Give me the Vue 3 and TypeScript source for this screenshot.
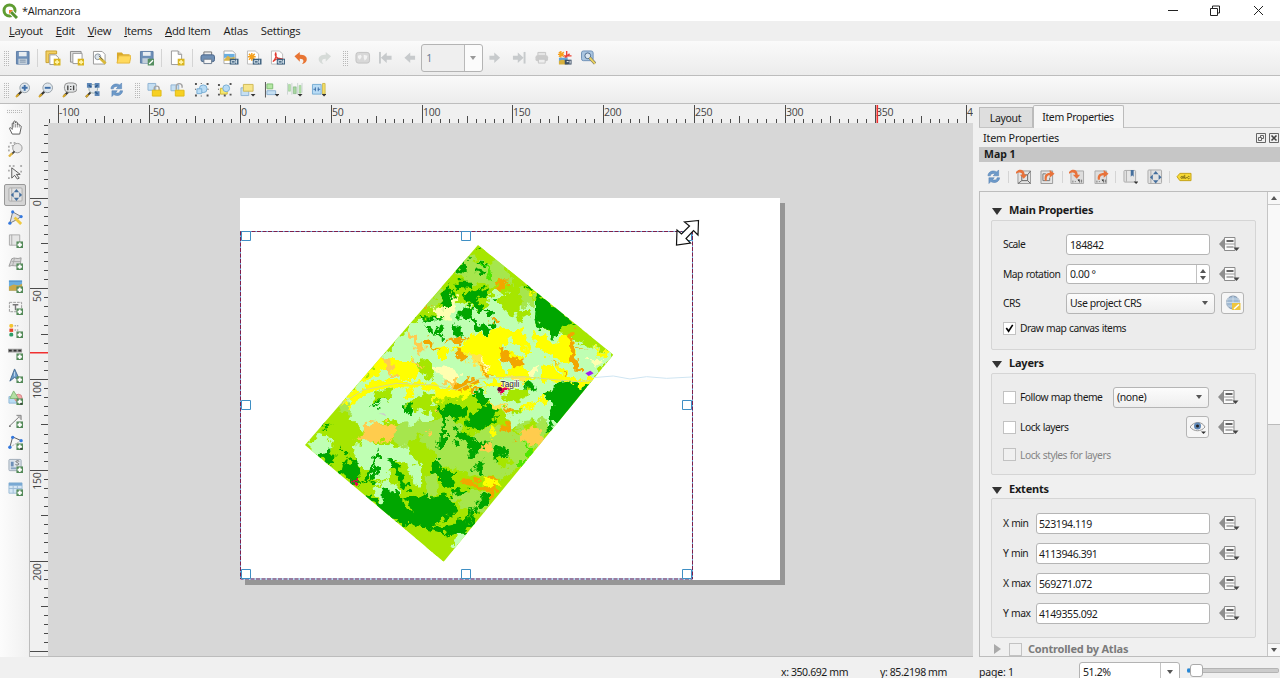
<script setup lang="ts">
interface Tick { p: number; size: number; label?: string }

const icons: Record<string, string> = {
  save: '<path d="M1.500 1.500h13v13h-13z" fill="#6d8fb8" stroke="#5f7fa6"/><path d="M4 2h8v4.500H4z" fill="#e9eef2"/><path d="M3.500 9h9v5.500h-9z" fill="#c3cfdb"/><path d="M5 10.500h6M5 12.500h6" stroke="#8196ac"/>',
  newlay: '<path d="M1 1h11v3H4v9H1z" fill="#f3d063" stroke="#c8a030"/><path d="M5 5h6l3 3v7H5z" fill="#fff" stroke="#9a9a9a"/><path d="M9 9h7v7H9z" fill="#d9b520"/><path d="M12.500 10.300v4.400M10.300 12.500h4.400" stroke="#fff4a8" stroke-width="1.600"/>',
  dup: '<path d="M1.500 1.500h11v11h-11z" fill="#ddd" stroke="#8b8b8b"/><path d="M4 3.500h9.500V14H4z" fill="#fff" stroke="#999"/><path d="M9 9h7v7H9z" fill="#d9b520"/><path d="M12.500 10.300v4.400M10.300 12.500h4.400" stroke="#fff4a8" stroke-width="1.600"/>',
  manager: '<path d="M1.500 1.500h9l3 3v10h-12z" fill="#fff" stroke="#9a9a9a"/><circle cx="6" cy="7" r="3" fill="#dce5ec" stroke="#8a949c"/><path d="M8 8l6 6" stroke="#d8b83a" stroke-width="3"/><path d="M7 6l4 4" stroke="#666"/>',
  folder: '<path d="M1 2.500h5l1.500 2H14v9H1z" fill="#d9a92a"/><path d="M1 13.500L3 6h12.500L14 13.500z" fill="#ffd95c" stroke="#e5b83f"/>',
  savetpl: '<path d="M1.500 1.500h13v12h-13z" fill="#6d8fb8" stroke="#5f7fa6"/><path d="M4 2h8v4H4z" fill="#e9eef2"/><path d="M3.500 8.500h7v5h-7z" fill="#c3cfdb"/><path d="M9 9h7v7H9z" fill="#568f61"/><path d="M10.500 14.500l4-4" stroke="#fff" stroke-width="1.400"/>',
  page: '<path d="M2.500 1h7l3.500 3.500V15H2.500z" fill="#fff" stroke="#999"/><path d="M9.500 1v3.500H13" fill="#ddd" stroke="#999"/><path d="M9 9h7v7H9z" fill="#d9b520"/><path d="M12.500 10.300v4.400M10.300 12.500h4.400" stroke="#fff4a8" stroke-width="1.600"/>',
  print: '<path d="M4 2h8v4H4z" fill="#eee" stroke="#777"/><rect x="1" y="5" width="14" height="7" rx="2" fill="#6f8fb4" stroke="#4b6689"/><path d="M4 9.500h8V14H4z" fill="#f5f5f5" stroke="#6b7c90"/>',
  image: '<path d="M1 1h9l3 3v10H1z" fill="#fff" stroke="#aaa"/><path d="M1 4h11v4H1z" fill="#6aaee0"/><path d="M1 10l4-4 3 2 4-1v4H1z" fill="#d8b54a"/><path d="M7 9h9v6H7z" fill="#3c5f7d"/><path d="M8.500 11h4v2.500h-4zM14 10v4" fill="none" stroke="#dce8f0"/>',
  svgx: '<path d="M1.500 1h8L13 4v10.500H1.500z" fill="#fff" stroke="#bbb"/><path d="M6 3v8M2 7h8M3 4l6 6M9 4l-6 6" stroke="#f5a01c" stroke-width="1.500"/><path d="M7 9h9v6H7z" fill="#3c5f7d"/><path d="M8.500 11h4v2.500h-4zM14 10v4" fill="none" stroke="#dce8f0"/>',
  pdf: '<path d="M1.500 1h8L13 4v10.500H1.500z" fill="#fff" stroke="#bbb"/><path d="M3 12c3-3 4-7 3-9-2 3 2 7 6 6-3-1-6 0-9 3z" fill="none" stroke="#e23b30" stroke-width="1.200"/><path d="M7 9h9v6H7z" fill="#3c5f7d"/><path d="M8.500 11h4v2.500h-4zM14 10v4" fill="none" stroke="#dce8f0"/>',
  undo: '<path d="M1.500 6.500L7 2v3c6-.5 8 3 7 6-.8 2-2.500 3.200-5 3.500 2.300-1.600 3-5.500-2-5.500v3z" fill="#e87534"/>',
  redo: '<path d="M14.500 6.500L9 2v3C3 4.500 1 8 2 11c.8 2 2.500 3.200 5 3.500C4.700 12.900 4 9 9 9v3z" fill="#d6dbd8"/>',
  atlas: '<rect x="1" y="2.500" width="14" height="11" rx="2.500" fill="#d8d8d8" stroke="#c2c2c2"/><path d="M3 6l3-1 1 2-2 3-2-2zM9 5l4 1-1 3-2 2-1-3z" fill="#f3f3f3"/>',
  first: '<path d="M2 2v12" stroke="#c7cacc" stroke-width="2"/><path d="M3 8l6-5.500V6h5v4H9v3.500z" fill="#c7cacc"/>',
  prev: '<path d="M2.500 8l6-5.500V6h5v4h-5v3.500z" fill="#c7cacc"/>',
  next: '<path d="M13.500 8l-6-5.500V6h-5v4h5v3.500z" fill="#c7cacc"/>',
  last: '<path d="M14 2v12" stroke="#c7cacc" stroke-width="2"/><path d="M13 8L7 2.500V6H2v4h5v3.500z" fill="#c7cacc"/>',
  printoff: '<path d="M4 2.500h8V6H4z" fill="#e5e5e5" stroke="#c6c6c6"/><rect x="1.500" y="5.500" width="13" height="6" rx="2" fill="#cbcbcb"/><path d="M4.500 9.500h7v4h-7z" fill="#eee" stroke="#c6c6c6"/>',
  export: '<path d="M4 1v7M1 4.500h6M2 2l5 5M7 2L2 7" stroke="#f5a01c" stroke-width="1.400"/><path d="M10 1v7M7 6h8M8 8l5-4" stroke="#ea4436" stroke-width="1.400"/><path d="M2 8h9v6H2z" fill="#64a5d6"/><path d="M2 11l3-1 6 1v4H2z" fill="#d8b03c"/><path d="M8 10h7v5H8z" fill="#3b4f66"/><path d="M10 12h2M13.500 11v3" stroke="#fff"/>',
  atlasset: '<rect x="0.500" y="1" width="12" height="10" rx="2" fill="#a9c5e0" stroke="#6f92b8"/><circle cx="7" cy="6" r="3" fill="#dbe6ef" stroke="#4d6c8e"/><path d="M9 8l5.500 6" stroke="#6b6b6b" stroke-width="3.200"/><path d="M9 8l5.500 6" stroke="#ead25e" stroke-width="2"/>',
  zoomin: '<path d="M2 14.500L6.500 10" stroke="#333" stroke-width="2.200"/><path d="M1 15.500l3-3" stroke="#d8a82a" stroke-width="2"/><circle cx="10" cy="6" r="5" fill="#dfe7ee" stroke="#98a1a8"/><path d="M10 3v6M7 6h6" stroke="#3f6fa8" stroke-width="2"/>',
  zoomout: '<path d="M2 14.500L6.500 10" stroke="#333" stroke-width="2.200"/><path d="M1 15.500l3-3" stroke="#d8a82a" stroke-width="2"/><circle cx="10" cy="6" r="5" fill="#dfe7ee" stroke="#98a1a8"/><path d="M7 6h6" stroke="#3f6fa8" stroke-width="2"/>',
  zoomone: '<path d="M2 14.500L6.500 10" stroke="#333" stroke-width="2.200"/><path d="M1 15.500l3-3" stroke="#d8a82a" stroke-width="2"/><rect x="2.500" y="1" width="13" height="9.500" rx="4" fill="#e4e6e7" stroke="#909090"/><path d="M6 3.500v5M12 3.500v5M9 4v1.200M9 7v1.200" stroke="#444" stroke-width="1.400"/>',
  zoomfull: '<path d="M1 15.500l5-5" stroke="#333" stroke-width="2"/><path d="M1 15.500l2.500-2.500" stroke="#d8a82a" stroke-width="2"/><circle cx="8.500" cy="7" r="4.500" fill="#e5e9ec" stroke="#9aa"/><path d="M2 1h5v5H2zM10 1h5v5h-5zM10 9.500h5v5h-5z" fill="#5c86b6"/><path d="M6.500 5.500L4 3M10.500 5.500L13 3M10.500 10L13 12.500" stroke="#2f5a8c" stroke-width="1.400"/>',
  refresh: '<path d="M2 7C2 3 7 .5 11 3l2-2v6H7.500L9.300 5C7 4 4.500 5 4.500 7z" fill="#6d9ac9" stroke="#4a79ae" stroke-width=".5"/><path d="M14 9c0 4-5 6.500-9 4l-2 2V9h5.500L6.700 11c2.300 1 4.800 0 4.800-2z" fill="#6d9ac9" stroke="#4a79ae" stroke-width=".5"/>',
  lock: '<path d="M1 1.500h8v7H1z" fill="#c5dff2" stroke="#8fb4d4"/><path d="M7.500 9V6.500c0-3 5-3 5 0V9" fill="none" stroke="#a3a3a3" stroke-width="1.500"/><path d="M5.500 8.500h9v6h-9z" fill="#f7d022" stroke="#e0bb17"/>',
  unlock: '<path d="M1 3h8v6H1z" fill="#c5dff2" stroke="#8fb4d4"/><path d="M6.500 8V4.500c0-4 6-3.500 6 0V6" fill="none" stroke="#a3a3a3" stroke-width="1.500"/><path d="M5.500 8.500h9v6h-9z" fill="#f7d022" stroke="#e0bb17"/>',
  group: '<circle cx="9.500" cy="7" r="4" fill="#b9dcf5" stroke="#78add4"/><path d="M3 7h5v5H3z" fill="#b9dcf5" stroke="#78add4"/><path d="M1 1h2v2H1zM13 1h2v2h-2zM1 13h2v2H1zM13 13h2v2h-2zM7 1h1v1H7zM1 7h1v1H1zM14 7h1v1h-1zM7 14h1v1H7z" fill="#555"/>',
  ungroup: '<path d="M3.500 6.500h7v6h-7z" fill="#f5e770" stroke="#d1b737"/><circle cx="9.500" cy="6.500" r="3.500" fill="#b9dcf5" stroke="#78add4"/><path d="M1 2h2v2H1zM13 1h2v2h-2zM1 12h2v2H1zM13 12h2v2h-2zM7 13h2v2H7zM1 7h1v1H1z" fill="#555"/>',
  raise: '<path d="M1 6h8v8H1z" fill="#c5dff2" stroke="#8fb4d4"/><path d="M3.500 2.500h10v7h-10z" fill="#f7e58a" stroke="#d0ba58"/><path d="M11 12.500h5L13.500 15z" fill="#333"/>',
  align: '<path d="M1.500 0v16" stroke="#555"/><path d="M3 2h6v5H3z" fill="#b3e8a2" stroke="#7fbd74"/><path d="M3 9h9v4H3z" fill="#c5dff2" stroke="#8fb4d4"/><path d="M11 12.500h5L13.500 15z" fill="#333"/>',
  distrib: '<path d="M1.500 2.500h2v7h-2zM12.500 3.500h2v8h-2z" fill="#b5e4aa" stroke="#8dc387" stroke-width=".5"/><path d="M6.500 5h3v7h-3z" fill="#a8d7a0" stroke="#69a16e" stroke-width=".5"/><path d="M.5 1v12M5 1v12M11 1v12M15.500 1v10" stroke="#b9c7c4" stroke-width=".7"/><path d="M11 12.500h5L13.500 15z" fill="#333"/>',
  resize: '<path d="M1.500 2.500h9v10h-9z" fill="#b9dcf5" stroke="#78add4"/><path d="M2.500 7.500h2.500M7 7.500h2.500M4.500 5.500v4M7.500 5.500v4" stroke="#3f6fa8"/><path d="M12 1.500h2.500v11H12z" fill="#f7e26a" stroke="#cdb94c"/><path d="M11 12.500h5L13.500 15z" fill="#333"/>',
  hand: '<path d="M4.500 15L2 10c-1-2 .5-2.500 1.500-1L4.500 10V4c0-1.300 1.600-1.300 1.600 0V2c0-1.300 1.900-1.300 1.900 0v1c0-1.300 2-1.300 2 0v2c0-1 1.800-1 1.800 0L13 6c1 0 1.500 1 1 2l-1.500 7z" fill="#fff" stroke="#555"/><path d="M6.200 4v4M8.100 4v4M10 4v4M12 5v3" stroke="#777" stroke-width=".8"/>',
  pan: '<path d="M2 1h2M6 1h2M1 4v2M1 8v2M4 4h1" stroke="#666"/><circle cx="10" cy="6.500" r="5" fill="#e9e9e9" stroke="#999"/><path d="M7 10l-3 3" stroke="#444" stroke-width="2"/><path d="M4.500 12L1 15.500" stroke="#dfb544" stroke-width="2.500"/>',
  select: '<path d="M1 1h2M5 1h2M13 1h2M1 5v2M1 13v2M14 6v2" stroke="#999" stroke-width="1.500"/><path d="M4 3l9 7H9l3 4-2 1-3-4-3 3z" fill="#eee" stroke="#555"/>',
  move: '<rect x="1" y="1" width="14" height="14" rx="1" fill="#e2e2e2" stroke="#aaa"/><path d="M4 1v14" stroke="#aaa"/><path d="M9 2l2.800 3.500H6.200zM9 15l2.800-3.500H6.200zM3 8.500L6 5.700v5.600zM15 8.500l-3-2.800v5.600z" fill="#456f9d"/>',
  nodes: '<path d="M2 14L5 2l9 5L8 11z" fill="#e2e2e2" stroke="#777"/><path d="M7 8l7 7" stroke="#efc940" stroke-width="3"/><circle cx="5" cy="2" r="1.700" fill="#3478de"/><circle cx="14" cy="7" r="1.700" fill="#3478de"/><circle cx="2" cy="14" r="1.700" fill="#3478de"/>',
  addmap: '<path d="M1.500 2h11v11h-11z" fill="#e6e6e6" stroke="#aaa"/><path d="M4 2v11" stroke="#aaa"/>PLUS',
  add3d: '<path d="M4 4c3-2 5 1 10-1l-1 8c-4 2-8-1-12 1z" fill="#d6d6d6" stroke="#999"/><path d="M4 7h9M7 3L5 11" stroke="#aaa"/>PLUS',
  addpic: '<path d="M1 2.500h14v11H1z" fill="#6aaee0"/><path d="M1 9l5-2 5 1 4-2v7.500H1z" fill="#c9a84a"/><path d="M1 3.500h14" stroke="#5590c7"/>PLUS',
  addlabel: '<path d="M1.500 2.500h13v10h-13z" fill="#f4f4f4" stroke="#999" stroke-dasharray="3 1"/><path d="M5 5h6M8 5v6" stroke="#777" stroke-width="1.500"/>PLUS',
  addlegend: '<rect x="1.500" y="1" width="4" height="4" rx="1.500" fill="#f4c430"/><path d="M1.500 6h4v3.500h-4z" fill="#e8452c"/><rect x="1.500" y="10.500" width="4" height="4" rx="1.500" fill="#2d9c66"/><path d="M7 3h5M7 7.500h4" stroke="#888" stroke-dasharray="1.500 1"/>PLUS',
  addscale: '<path d="M0 4h15v4H0z" fill="#999"/><path d="M1 6h3M6 6h3M11 6h3" stroke="#333" stroke-width="2"/>PLUS',
  addnorth: '<path d="M7 1l6 13-6-4-5 4z" fill="#6d9bc9" stroke="#446a91"/><path d="M7 4v5" stroke="#c8deef"/>PLUS',
  addshape: '<path d="M1 7h8v7H1z" fill="#b9dcf5" stroke="#91b9d7"/><circle cx="11" cy="8.500" r="4" fill="#f4a9a9" stroke="#d58686"/><path d="M6 1l5 8H2z" fill="#b4e0a4" stroke="#80b876"/>PLUS<path d="M12 14h4l-2 2z" fill="#333"/>',
  addarrow: '<path d="M1.500 14L13 3" stroke="#777"/><path d="M9 2.500h5v5" fill="#bbb" stroke="#888"/><circle cx="2" cy="14" r="1" fill="#777"/>PLUS',
  addnode: '<path d="M2 13L5 2l9 4" fill="none" stroke="#555"/><path d="M2 13L14 6" stroke="#aaa" stroke-dasharray="2 1"/><circle cx="5" cy="2.500" r="1.800" fill="#3478de"/><circle cx="14" cy="6" r="1.800" fill="#3478de"/><circle cx="2" cy="13" r="1.800" fill="#3478de"/>PLUS<path d="M12 14h4l-2 2z" fill="#333"/>',
  addhtml: '<rect x="1" y="1.500" width="13" height="12" rx="1" fill="#dce3ea" stroke="#9daab6"/><path d="M3 4h3v5H3z" fill="#6d8fb8"/><path d="M12 3.500c-3-1.500-5 .5-2 1.500s1 3.500-2 2" fill="none" stroke="#666"/><path d="M3 11h6" stroke="#8aa5c3" stroke-width="2"/>PLUS',
  addtable: '<path d="M1 2h14v11H1z" fill="#d5e6f4" stroke="#9dbcd6"/><path d="M1 2h14v3H1z" fill="#79a9d3"/><path d="M5.500 5v8M10 5v8M1 8h14" stroke="#9dbcd6"/>PLUS',
  setin: '<path d="M2 2h13v13H2z" fill="#e4e4e4" stroke="#999"/><path d="M6 6h6v6H6zM12 6l3-4M12 12l3 3M6 12l-4 3" stroke="#666" fill="none"/><path d="M0 3C4-1 9 1 9 6h2.500L8 10 4 6h2.500C6 3 3 3 0 5z" fill="#e8723a"/>',
  setout: '<path d="M1 2h12v13H1z" fill="#e4e4e4" stroke="#999"/><path d="M3 5h3M3 5v7h7V9" stroke="#777" fill="none"/><path d="M5 12C4 6 6 4 10 4V1l5 4-5 4V6.500C7 6.500 7 9 7 12z" fill="#e8723a"/>',
  scin: '<path d="M2 2h13v13H2z" fill="#ddd" stroke="#aaa"/><path d="M4 12v2M6 13h1M9 11h2v3M13 11v3" stroke="#777"/><path d="M0 3C4-1 9 1 9 6h2.500L8 10 4 6h2.500C6 3 3 3 0 5z" fill="#e8723a"/>',
  scout: '<path d="M1 2h12v13H1z" fill="#ddd" stroke="#aaa"/><path d="M3 12v2M5 13h1M8 11h2v3M12 11v3" stroke="#777"/><path d="M4 11C3 6 6 4 10 4V1l5 4-5 4V6.500C7 6.500 6 8 6 11z" fill="#e8723a"/>',
  bookmark: '<rect x="1" y="1.500" width="12" height="12" rx="1" fill="#e6e6e6" stroke="#aaa"/><path d="M3.500 2v11" stroke="#aaa"/><path d="M8 1h3v7L9.500 6.500 8 8z" fill="#456f9d"/><path d="M11 13h5l-2.500 2.500z" fill="#333"/>',
  label: '<path d="M1 8l3-3.500h11.500v7.500H4z" fill="#f7da35" stroke="#c4a21a"/><circle cx="6" cy="8.700" r="1" fill="none" stroke="#6a5a12" stroke-width=".8"/><path d="M7.500 7v3M9 6v4M11 8.500a1 1 0 1 1-2 .2M14 8a1.200 1.200 0 1 0 0 1.700" fill="none" stroke="#6a5a12" stroke-width=".8"/>',
  override: '<path d="M0 8l5-5.500v11z" fill="#8f8f8f"/><path d="M5.500 1.500h10.500v13h-10.500z" fill="#fafafa" stroke="#8b8b8b"/><path d="M7.500 5h7" stroke="#333" stroke-width="1.500"/><path d="M5.500 8h10.500" stroke="#999"/><path d="M7.500 11h7" stroke="#666"/><path d="M14.500 11.500h6l-3 3.500z" fill="#444"/>',
  globe: '<circle cx="8" cy="7.500" r="6.500" fill="#9fb9d3" stroke="#8094aa"/><path d="M1.500 7.500h13M8 1v13M3 4h10M3 11h10" stroke="#dce6ef" stroke-width=".7"/><path d="M4 1.500c-4 6-2 10 0 12M12 1.500c4 6 2 10 0 12" stroke="#dce6ef" fill="none" stroke-width=".7"/><path d="M7 8h8.500v7H7z" fill="#efc63e"/><path d="M9 14l5-4.500" stroke="#fff" stroke-width="1.500"/>',
  eye: '<path d="M0 8C4 2 12 2 15 8 11 13 4 13 0 8z" fill="#f5f5f5" stroke="#999"/><circle cx="7.500" cy="7" r="3.500" fill="#5e87b6"/><circle cx="7.500" cy="7" r="1.500" fill="#222"/><path d="M11 12.500h5L13.500 15z" fill="#333"/>',
}
const plus = '<path d="M9 9h7v7H9z" fill="#548a59"/><path d="M12.500 10.200v4.600M10.200 12.500h4.600" stroke="#fff" stroke-width="2"/>'
const icon = (name: string) => icons[name].replace('PLUS', plus)

const menus = ['Layout', 'Edit', 'View', 'Items', 'Add Item', 'Atlas', 'Settings']
const mainBar = ['#', 'save', '|', 'newlay', 'dup', 'manager', 'folder', 'savetpl', '|', 'page', '|', 'print', 'image', 'svgx', 'pdf', 'undo', 'redo', '#', 'atlas', 'first', 'prev', '=', 'next', 'last', 'printoff', 'export', 'atlasset']
const viewBar = ['#', 'zoomin', 'zoomout', 'zoomone', 'zoomfull', 'refresh', '#', 'lock', 'unlock', 'group', 'ungroup', 'raise', 'align', 'distrib', 'resize']
const tools = ['hand', 'pan', 'select', 'move', 'nodes', 'addmap', 'add3d', 'addpic', 'addlabel', 'addlegend', 'addscale', 'addnorth', 'addshape', 'addarrow', 'addnode', 'addhtml', 'addtable']
const mapBar = ['refresh', '|', 'setin', 'setout', '|', 'scin', 'scout', '|', 'bookmark', 'move', '|', 'label']
const extents = [
  { name: 'X min', value: '523194.119' },
  { name: 'Y min', value: '4113946.391' },
  { name: 'X max', value: '569271.072' },
  { name: 'Y max', value: '4149355.092' },
]

const pxPerMm = 1.8155
function ticks(from: number, to: number, origin: number): Tick[] {
  const out: Tick[] = []
  for (let mm = from; mm <= to; mm += 5) {
    const major = mm % 50 === 0
    out.push({ p: Math.round(origin + mm * pxPerMm) + 0.5, size: major ? 18 : mm % 25 === 0 ? 7 : 4, label: major ? String(mm) : undefined })
  }
  return out
}
const hTicks = ticks(-105, 400, 240)
const vTicks = ticks(-40, 250, 197.500)
const handles = [[241, 231], [461, 231], [682, 231], [241, 400], [682, 400], [241, 569], [461, 569], [682, 569]]

const land: Record<string, string[]> = {
  '#bfffb3': [
    '375,270 440,265 500,230 560,240 620,180 660,200 740,220 740,290 850,330 970,374 890,470 830,530 800,600 700,600 640,540 540,480 420,525 330,540 260,560 220,600 180,560 150,525 270,390',
    '480,210 540,225 550,280 520,315 470,290 465,240', '180,530 270,500 400,500 430,560 380,600 300,570 240,590 190,560',
    '45,645 105,605 130,620 130,665 90,690', '190,650 230,620 260,640 300,650 350,640 385,690 395,770 370,765 350,700 310,690 300,730 260,760 230,720 210,720',
    '250,770 280,760 280,820 265,825', '730,480 780,500 785,560 750,575 700,570 660,600 650,560 700,520', '500,905 540,910 490,960', '290,740 330,790 320,800 270,760',
  ],
  '#a6e64d': [
    '530,85 590,75 640,90 690,130 680,165 620,150 600,170 560,160 490,150 490,125', '690,165 735,195 730,235 690,215', '400,230 450,180 455,215 420,240',
    '310,600 330,580 380,575 440,570 490,560 520,600 520,670 480,680 440,660 380,650 320,645', '560,600 650,590 720,640 740,650 700,700 640,740 560,740 500,720 430,700 440,640 500,650',
    '680,580 770,565 775,610 740,650 690,610', '480,800 560,780 610,800 580,850 530,840', '140,520 170,510 190,560 170,570', '410,740 440,730 440,790 410,800',
  ],
  '#a6e600': [
    '560,50 610,85 610,100 550,85', '440,170 500,125 530,160 500,190 460,180', '620,205 670,190 700,220 680,260 640,240', '690,240 715,240 700,280 670,265',
    '375,405 405,385 440,405 430,450 400,440', '395,245 425,240 430,265 400,262', '820,280 870,285 860,315 830,305', '875,310 900,315 895,335 880,330',
    '260,485 310,470 300,500 260,515', '350,525 400,485 430,500 420,550 370,540', '430,510 490,495 460,540', '650,480 730,470 700,510 640,520', '560,190 600,215 590,240 560,220', '640,100 690,130 700,165 670,160',
    '700,590 740,570 740,610 710,620', '660,540 700,535 670,560', '350,640 390,620 410,650 380,700', '90,590 150,540 180,560 200,600 170,650 130,640', '610,680 680,690 640,720', '645,430 665,425 675,437 655,440',
  ],
  '#ffff00': [
    '520,340 540,315 600,310 630,290 660,310 690,295 710,320 715,375 690,390 630,380 650,440 600,440 580,410 530,375 480,360 500,345', '650,300 690,300 710,350 690,375 660,340',
    '725,305 800,340 830,310 860,350 860,380 820,400 740,350', '270,385 300,390 360,390 385,420 380,445 330,450 300,410 250,440 210,460 180,490 165,525 150,525',
    '440,350 470,345 480,380 445,385', '430,465 500,480 550,490 520,505 430,510', '660,390 700,410 740,450 700,460 650,440', '180,500 240,460 300,450 430,460 500,490 550,460 620,450 680,470 560,480 490,500 440,480 320,470 240,480 190,510',
    '760,410 800,395 840,430 860,460 750,450', '910,355 960,370 930,385', '740,520 790,465 860,455 910,440 920,445 870,470 800,470 740,530 690,540 690,530', '190,475 240,485 170,540', '350,480 370,460 365,500 345,510', '600,590 615,600 610,630 602,625', '580,750 620,745 640,770 600,770', '725,175 740,190 725,190',
  ],
  '#bfffb4': ['640,340 665,325 690,350 705,385 660,370 635,355', '505,420 535,400 570,440 530,440', '580,400 545,385 575,435', '770,370 790,390 830,400 850,430 800,400', '700,290 720,300 745,370 790,400 820,440 770,400 730,400 720,345', '540,470 580,455 600,475 550,478'],
  '#ffffb0': ['425,235 465,225 490,195 505,200 490,250 480,275 440,260', '440,410 490,415 510,430 500,460 460,450 445,435', '565,375 580,380 595,430 570,410', '890,390 940,390 930,410 900,400', '720,410 745,410 735,440 715,430'],
  '#ffe64d': ['530,370 570,370 590,430 570,425', '520,390 545,400 530,400', '660,430 710,440 700,460 650,445', '600,520 650,530 610,540'],
  '#ffcc4d': ['345,300 360,305 400,350 400,370 380,360 355,325', '275,385 300,385 310,430 330,440 305,445 290,410', '225,575 270,580 310,580 325,595 300,640 260,630 190,635 220,610', '405,600 420,598 420,615 410,618', '360,390 395,405 380,410', '440,540 460,550 455,560 440,550', '690,610 730,590 760,600 750,660 730,640 695,630', '565,645 600,640 615,650 600,665 570,655', '460,460 500,450 520,485 480,470', '870,500 885,480 870,520 855,525', '620,520 650,540 630,530'],
  '#f2a600': [
    '610,150 625,155 650,150 640,185 620,180', '650,150 665,165 655,175', '465,335 500,320 540,318 505,340', '400,320 415,320 425,345 450,355 430,360 405,340', '495,355 510,350 520,370 535,380 510,395 500,380',
    '627,355 640,355 660,380 700,390 705,415 680,415 640,395', '835,310 855,305 850,340 890,365 860,350 855,375 870,410 878,425 860,425 840,375', '500,460 540,440 565,450 530,470 520,485 495,480', '540,475 575,475 560,487 545,485', '400,235 420,225 415,237',
    '600,265 630,275 610,285', '555,390 600,435 590,440', '780,398 815,402 785,404', '820,420 832,430 825,438', '630,580 655,580 660,605 640,605', '640,530 680,540 650,545', '510,755 530,745 580,760 625,770 610,800 600,795 560,770 520,765', '605,740 625,745 610,760', '660,627 675,630 665,634', '880,460 885,480 870,500',
  ],
  '#00a600': [
    '495,125 530,85 530,130', '550,62 565,47 560,62', '565,95 600,97 590,110 570,105', '555,120 580,130 575,140 558,135', '455,190 480,165 490,190 480,230 455,235', '500,155 545,155 550,175 500,170',
    '520,190 555,185 590,175 600,195 560,210 590,235 560,240 530,215', '505,245 530,225 550,240 555,270 590,290 600,310 550,305 540,270 505,265', '590,240 610,240 605,255 595,255', '600,280 620,285 600,305', '480,280 515,290 515,320 490,310', '375,260 460,265 455,272 390,268', '405,275 420,290 455,325 450,328 415,300', '440,290 460,298 455,310 440,308', '700,155 730,180 725,185 705,170',
    '740,195 760,200 845,270 820,290 795,325 780,300 745,295 735,260', '605,205 635,205 610,212', '845,275 865,287 850,285', '765,495 790,460 835,455 870,470 905,455 865,525 800,580 780,570 790,530', '705,455 740,470 730,485 710,475', '550,490 580,485 605,500 580,520 620,540 620,580 570,600 550,590 530,600 525,570 570,540 570,510',
    '440,520 460,535 480,520 495,530 535,525 525,560 480,570 465,565 465,660 445,650 455,570', '490,590 520,610 580,640 605,635 570,650 560,680 535,680 540,650 500,625', '495,630 510,640 500,655 492,645', '620,645 650,655 645,680 625,685 615,700 612,670', '770,580 795,575 785,600 770,610',
    '430,690 455,690 450,710 480,725 500,730 490,760 470,775 535,780 530,788 490,800 480,770 450,770 450,740 425,730', '65,667 100,670 130,655 130,690 115,695 125,715', '150,650 175,670 170,680', '155,720 180,685 205,690 210,770 190,760 150,725', '245,700 262,655 265,680 230,755 215,765', '235,760 260,700 270,715 260,750', '295,690 320,695 340,730 345,755 365,770 350,775 330,770 320,730 305,710', '260,510 290,505 255,520', '90,590 125,590 110,600',
    '275,765 320,790 330,810 380,795 440,800 480,795 500,830 500,850 430,885 500,870 530,860 540,830 560,845 555,870 530,907 490,915 420,900 330,880 215,800 235,790 260,820 275,820', '560,805 590,795 610,800 585,830 560,835', '565,695 580,695 575,730 590,740 560,735', '550,705 560,715 550,720', '345,525 365,530 355,555 345,545', '240,515 270,525 260,540',
  ],
  '#4de600': ['580,100 595,105 610,145 600,145', '700,630 730,665 720,690 710,670', '690,690 715,690 690,715'],
  '#e6004d': ['625,475 650,470 650,480 630,482', '185,743 210,748 200,775 190,765 205,755'],
}
const overlays = ['330,880 420,900 500,918 461,995', '570,530 545,555 525,580 540,550', '340,790 365,840 340,825', '475,870 425,892 490,885 530,850 510,870', '230,760 225,785 240,800 215,775', '540,860 530,890 545,835']
</script>

<template>
  <div class="window">
    <header class="titlebar">
      <svg class="logo" viewBox="0 0 16 16"><circle cx="7.500" cy="7.500" r="5.500" fill="none" stroke="#5f9d32" stroke-width="3" /><path d="M7.500 7.500l7 7" stroke="#fff" stroke-width="5" /><path d="M9 9l6 6" stroke="#569330" stroke-width="3" /><path d="M7 7h4L7 11z" fill="#ee7f2d" /></svg>
      <span>*Almanzora</span>
      <svg class="winbtns" viewBox="0 0 110 20"><path d="M1 9.500h10M43.500 7.500h7v7h-7zM45.500 7v-2h7v7h-2M87 5l9 9M96 5l-9 9" fill="none" stroke="#222" /></svg>
    </header>
    <nav class="menubar">
      <span v-for="m in menus" :key="m" :class="{ plain: m === 'Atlas' || m === 'Settings' }">{{ m }}</span>
    </nav>
    <div v-for="(bar, bi) in [mainBar, viewBar]" :key="bi" class="toolbar" :class="{ second: bi === 1 }">
      <template v-for="(n, i) in bar" :key="i">
        <i v-if="n === '#'" class="grip" :class="{ wide: i > 0 }"></i>
        <i v-else-if="n === '|'" class="sep"></i>
        <div v-else-if="n === '='" class="pagebox"><span>1</span><i class="down pale"></i></div>
        <span v-else class="cell"><svg viewBox="0 0 16 16" v-html="icon(n)"></svg></span>
      </template>
    </div>

    <main class="body">
      <aside class="tools">
        <i class="grip flat"></i>
        <span v-for="t in tools" :key="t" class="tool" :class="{ active: t === 'move' }"><svg viewBox="0 0 16 16" v-html="icon(t)"></svg></span>
      </aside>

      <svg class="canvas" viewBox="29 104 944 553">
        <defs>
          <clipPath id="outline"><path d="M564 45L970 374 461 995 45 645z" /></clipPath>
          <filter id="rough" x="0" y="0" width="100%" height="100%"><feTurbulence type="fractalNoise" baseFrequency="0.045" numOctaves="3" seed="4" /><feDisplacementMap in="SourceGraphic" scale="42" xChannelSelector="R" yChannelSelector="G" /></filter>
        </defs>
        <path d="M29 104h944v553H29z" fill="#f0f0f0" />
        <path d="M48 123h925v533H48z" fill="#d7d7d7" />
        <path d="M29.500 104v553M29 656.500h944" stroke="#bcbcbc" />
        <g stroke="#4b4b4b">
          <path v-for="t in hTicks" :key="t.p" :d="`M${t.p} 123v-${t.size}`" />
          <path v-for="t in vTicks" :key="t.p" :d="`M48 ${t.p}h-${t.size}`" />
        </g>
        <g class="ruler">
          <template v-for="t in hTicks" :key="t.p"><text v-if="t.label" :x="t.p + 0.500" y="115.500">{{ t.label }}</text></template>
          <template v-for="t in vTicks" :key="t.p"><text v-if="t.label && t.label !== '250'" text-anchor="end" :transform="`translate(40.500 ${t.p + 2}) rotate(-90)`">{{ t.label }}</text></template>
        </g>
        <path d="M877.300 105v18M30 352.700h18" stroke="#f03030" stroke-width="1.600" />
        <path d="M245 203h540v382H245z" fill="#969696" />
        <path d="M240 198h540v382H240z" fill="#fff" />

        <g transform="translate(290 230) scale(.33333)">
          <g clip-path="url(#outline)">
            <path d="M0 0h1020v1020H0z" fill="#a6e600" />
            <g filter="url(#rough)">
              <g v-for="(shapes, color) in land" :key="color" :fill="color">
                <polygon v-for="s in shapes" :key="s" :points="s" />
              </g>
              <polygon v-for="s in overlays" :key="s" :points="s" fill="#a6e600" />
              <path d="M495 910l45-2-50 55z" fill="#bfffb3" />
            </g>
            <path d="M265 550l25 8-8-8z" fill="#ccc" />
            <path d="M140 530l80-50 100-20 110 5 70 15 70-35 130-5 160 15 150-10" fill="none" stroke="#d5dd8a" stroke-width="3" />
          </g>
          <path d="M886 430l15-8 10 8-15 8z" fill="#a020f0" />
          <path d="M910 443l60-5 50 9 50-7 60 5 76-4" fill="none" stroke="#cfe5f2" stroke-width="3" />
          <circle cx="629" cy="478" r="7" fill="#6b0a3a" />
          <path d="M636 475l15-5v10h-12z" fill="#e6004d" />
        </g>
        <text class="town" x="500.500" y="387">Tagili</text>

        <path d="M240.500 231.500h452v347.500h-452z" fill="none" stroke="#6db6e6" />
        <path d="M240.500 231.500h452v347.500h-452z" fill="none" stroke="#7d1f4d" stroke-dasharray="4 1.500" />
        <path v-for="h in handles" :key="h.join()" :d="`M${h[0] + .5} ${h[1] + .5}h9v9h-9z`" fill="#fff" stroke="#3f8fc4" />
        <path d="M698.500 220.500l-14 1.500 5 4-8 8-4.500-4-.5 15 14-2-4.500-4.500 7.500-8 4.500 4.500z" fill="#fff" stroke="#111" stroke-width="1.200" />
      </svg>

      <section class="dock">
        <div class="tabs"><span class="tab">Layout</span><span class="tab on">Item Properties</span></div>
        <div class="docktitle"><span>Item Properties</span>
          <svg viewBox="0 0 24 12"><path d="M1.500 1.500h9v9h-9zM14.500 1.500h9v9h-9z" fill="none" stroke="#666" stroke-linejoin="round" /><path d="M3.500 5.500h3v3h-3zM5.500 5V3.500h3v3H7" fill="none" stroke="#666" /><path d="M16.500 3.500l5 5M21.500 3.500l-5 5" stroke="#444" stroke-width="1.600" /></svg>
        </div>
        <div class="itemname">Map 1</div>
        <div class="mapbar">
          <template v-for="(n, i) in mapBar" :key="i"><i v-if="n === '|'" class="sep"></i><span v-else class="cell"><svg viewBox="0 0 16 16" v-html="icon(n)"></svg></span></template>
        </div>
        <div class="scroll">
          <div class="props">
            <h3 class="first"><i class="fold"></i>Main Properties</h3>
            <div class="box main">
              <div class="row"><label>Scale</label><div class="input">184842</div><svg class="ov" viewBox="0 0 21 16" v-html="icon('override')"></svg></div>
              <div class="row"><label>Map rotation</label><div class="input spin">0.00 °<b><i class="up"></i><i class="down"></i></b></div><svg class="ov" viewBox="0 0 21 16" v-html="icon('override')"></svg></div>
              <div class="row crs"><label>CRS</label><div class="combo">Use project CRS<i class="down"></i></div><div class="btn"><svg viewBox="0 0 16 16" v-html="icon('globe')"></svg></div></div>
              <div class="row check"><i class="cb"><svg viewBox="0 0 12 12"><path d="M2.500 5.500L5 9l4.500-7" fill="none" stroke="#000" stroke-width="1.800" /></svg></i><span>Draw map canvas items</span></div>
            </div>
            <h3><i class="fold"></i>Layers</h3>
            <div class="box layers">
              <div class="row"><i class="cb"></i><span class="grow">Follow map theme</span><div class="combo small">(none)<i class="down"></i></div><svg class="ov" viewBox="0 0 21 16" v-html="icon('override')"></svg></div>
              <div class="row"><i class="cb"></i><span class="grow">Lock layers</span><div class="btn"><svg viewBox="0 0 16 16" v-html="icon('eye')"></svg></div><svg class="ov" viewBox="0 0 21 16" v-html="icon('override')"></svg></div>
              <div class="row off"><i class="cb"></i><span>Lock styles for layers</span></div>
            </div>
            <h3 class="third"><i class="fold"></i>Extents</h3>
            <div class="box extents">
              <div v-for="e in extents" :key="e.name" class="row"><label>{{ e.name }}</label><div class="input">{{ e.value }}</div><svg class="ov" viewBox="0 0 21 16" v-html="icon('override')"></svg></div>
            </div>
            <h3 class="atlas"><i class="fold closed"></i><i class="cb"></i>Controlled by Atlas</h3>
          </div>
          <div class="bar"><b><i class="up"></i></b><div class="thumb"></div><b class="low"><i class="down"></i></b></div>
        </div>
      </section>
    </main>

    <footer class="status">
      <span class="sx">x: 350.692 mm</span><span class="sy">y: 85.2198 mm</span><span class="sp">page: 1</span>
      <div class="zoom"><span>51.2%</span><b><i class="down"></i></b></div>
      <div class="slider"><i></i></div>
    </footer>
  </div>
</template>

<style>
html, body { overflow: hidden; background: #f0f0f0; }
</style>
<style scoped>
* { box-sizing: border-box; }
svg { display: block; flex: none; }
.window { width: 1280px; height: 678px; display: flex; flex-direction: column; background: #f0f0f0; font: 10.5px/14px "Noto Sans", "Open Sans", sans-serif; letter-spacing: -0.4px; color: #1a1a1a; overflow: hidden; white-space: nowrap; }
.titlebar { height: 21px; background: #fff; display: flex; align-items: center; padding-left: 2px; font-family: "Open Sans", sans-serif; font-size: 11px; letter-spacing: -0.3px; }
.logo { width: 16px; height: 16px; margin-right: 4px; }
.winbtns { width: 110px; height: 20px; margin-left: auto; margin-right: 3px; }
.menubar { height: 20px; display: flex; gap: 13px; padding: 2px 0 0 9px; font: 11.300px/15px "Open Sans", sans-serif; letter-spacing: -0.300px; background: #efefef; }
.menubar span::first-letter { text-decoration: underline; }
.menubar .plain::first-letter { text-decoration: none; }
.toolbar { height: 35px; display: flex; align-items: center; border-bottom: 1px solid #bdbdbd; background: linear-gradient(#fafafa, #ececec); }
.toolbar.second { height: 28px; padding-top: 1px; }
.cell { width: 23.400px; display: flex; justify-content: center; flex: none; }
.cell svg { width: 15.500px; height: 15.500px; }
.sep { width: 1px; height: 18px; background: #d4d4d4; margin: 0 3px; flex: none; }
.grip { display: block; width: 5px; height: 16px; margin: 0 2px 0 4px; flex: none; background: linear-gradient(#f5f5f5 1px, transparent 1px) 0 0 / 2px 2px, repeating-linear-gradient(90deg, #b8b8b8 0 1px, transparent 1px 2px); }
.grip.wide { margin: 0 3px 0 7px; }
.grip.flat { width: 16px; height: 5px; margin: 0 7px 2px; }
.tools { padding-top: 5px; }
.pagebox { width: 62px; height: 28px; border: 1px solid #b4b4b4; border-radius: 3px; display: flex; align-items: center; justify-content: space-between; padding: 0 6px 0 4px; background: linear-gradient(90deg, #efefef 42px, #b9b9b9 42px, #b9b9b9 43px, #fbfbfb 43px); color: #6c7e96; }
.down, .up { width: 0; height: 0; border: 3.500px solid transparent; border-top: 4px solid #555; border-bottom: 0; display: block; flex: none; }
.up { border-top: 0; border-bottom: 4px solid #555; }
.down.pale { border-top-color: #999; }
.body { display: flex; height: 553px; }
.tools { width: 29px; background: linear-gradient(90deg, #fcfcfc, #f0f0f0); }
.tool { height: 22.550px; width: 22px; margin-left: 4px; display: flex; align-items: center; justify-content: center; border: 1px solid transparent; border-radius: 2px; }
.tool.active { background: #d5d5d5; border-color: #999; }
.tool svg { width: 15px; height: 15px; }
.canvas { width: 944px; height: 553px; }
.ruler { font: 10.500px "Open Sans", sans-serif; fill: #444; letter-spacing: -0.3px; }
.town { font: 8.300px "Liberation Sans", sans-serif; fill: #222; letter-spacing: 0; paint-order: stroke; stroke: #fff; stroke-width: 1px; }
.dock { width: 301px; margin-left: 6px; display: flex; flex-direction: column; }
.tabs { height: 24px; display: flex; align-items: flex-end; border-bottom: 1px solid #c4c4c4; letter-spacing: -0.350px; }
.tab { width: 54px; height: 20px; border: 1px solid #bbb; border-bottom: 0; background: #dedede; text-align: center; line-height: 20px; padding-right: 1px; }
.tab.on { width: 91px; height: 23px; background: #f6f6f6; line-height: 23px; border-radius: 2px 2px 0 0; margin-bottom: -1px; }
.docktitle { height: 19px; display: flex; align-items: center; justify-content: space-between; padding: 0 1px 0 4px; font-size: 10.800px; letter-spacing: -0.200px; }
.docktitle svg { width: 24px; height: 12px; }
.itemname { height: 15px; line-height: 15px; background: #c6c6c6; font-weight: bold; padding-left: 5px; letter-spacing: 0; }
.mapbar { height: 29px; display: flex; align-items: center; padding-left: 3px; }
.mapbar .sep { height: 12px; margin: 0 2px; }
.mapbar .cell { width: 24.300px; }
.scroll { height: 466px; display: flex; border: 1px solid #bdbdbd; border-right: 0; }
.props { width: 287px; padding: 0 10px 0 11px; overflow: hidden; }
h3 { font-size: 11px; line-height: 14px; margin: 6px 0 3px; height: 14px; display: flex; align-items: center; letter-spacing: -0.2px; }
.first { margin-top: 11px; }
.third { margin: 7px 0 2px; }
.fold { width: 0; height: 0; border: 5.500px solid transparent; border-top: 7px solid #333; border-bottom: 0; margin: 2px 7px 0 1px; }
.fold.closed { border: 5px solid transparent; border-left: 7px solid #aaa; border-right: 0; margin: 0 8px 0 3px; }
.box { border: 1px solid #d5d5d5; border-radius: 2px; background: #ececec; padding-left: 11px; width: 265px; }
.main { height: 130px; padding-top: 8px; }
.layers { height: 102px; padding-top: 8px; }
.extents { height: 140px; padding-top: 9px; }
.row { height: 30px; display: flex; align-items: center; }
.row label, .row > span { font-size: 10.300px; letter-spacing: -0.500px; word-spacing: 0.500px; }
.main label { width: 63px; }
.extents label { width: 33px; }
.input, .combo { height: 21px; border: 1px solid #b5b5b5; border-radius: 3px; background: #fff; padding-left: 3px; line-height: 20px; flex: none; }
.main .input { width: 144px; }
.extents .input { width: 174px; padding-left: 2px; }
.row .spin { display: flex; justify-content: space-between; height: 20px; line-height: 18px; }
.spin b { width: 13px; border-left: 1px solid #c1c1c1; display: flex; flex-direction: column; align-items: center; justify-content: center; gap: 3px; }
.ov { width: 21px; height: 16px; margin-left: 9px; }
.crs { height: 28px; }
.combo { width: 149px; display: flex; align-items: center; justify-content: space-between; padding-right: 6px; background: linear-gradient(#fcfcfc, #eee); }
.combo.small { width: 96px; }
.btn { width: 23px; height: 22px; border: 1px solid #b5b5b5; border-radius: 3px; background: #f6f6f6; margin-left: 6px; display: flex; align-items: center; justify-content: center; }
.btn svg { width: 16px; height: 16px; }
.check { height: 22px; }
.cb { width: 13px; height: 13px; border: 1px solid #c2c2c2; background: #fff; margin-right: 4px; flex: none; }
.cb svg { width: 11px; height: 11px; }
.grow { flex: 1; }
.layers .ov { margin-right: 16px; }
.off { color: #858585; height: 25px; }
.off .cb, .atlas .cb { background: #f0f0f0; }
.atlas { color: #7b7b7b; margin: 4px 0 0; }
.atlas .cb { margin-right: 6px; }
.bar { width: 13px; border-left: 1px solid #c5c5c5; background: #e5e5e5; display: flex; flex-direction: column; }
.bar b { height: 13px; display: flex; align-items: center; justify-content: center; background: #f8f8f8; border-bottom: 1px solid #c8c8c8; }
.thumb { height: 220px; background: #f9f9f9; border-bottom: 1px solid #bbb; }
.bar .low { margin-top: auto; border-top: 1px solid #c8c8c8; border-bottom: 0; }
.status { height: 21px; display: flex; align-items: center; padding: 8px 0 0 781px; }
.sx, .sy { width: 99px; }
.sp { width: 100px; letter-spacing: -0.200px; }
.zoom { width: 101px; height: 21px; border: 1px solid #b3b3b3; border-radius: 3px; background: #fff; display: flex; justify-content: space-between; line-height: 19px; padding-left: 3px; margin-top: 1px; flex: none; }
.zoom b { width: 19px; border-left: 1px solid #c4c4c4; display: flex; align-items: center; justify-content: center; }
.slider { width: 92px; height: 5px; border: 1px solid #b4b4b4; border-radius: 2px; background: #ccc; margin: 0 0 2px 7px; flex: none; border-left: 4px solid #2688d8; display: flex; align-items: center; }
.slider i { width: 13px; height: 13px; border: 1px solid #aaa; border-radius: 3px; background: #fff; margin-left: -1px; flex: none; }
</style>
